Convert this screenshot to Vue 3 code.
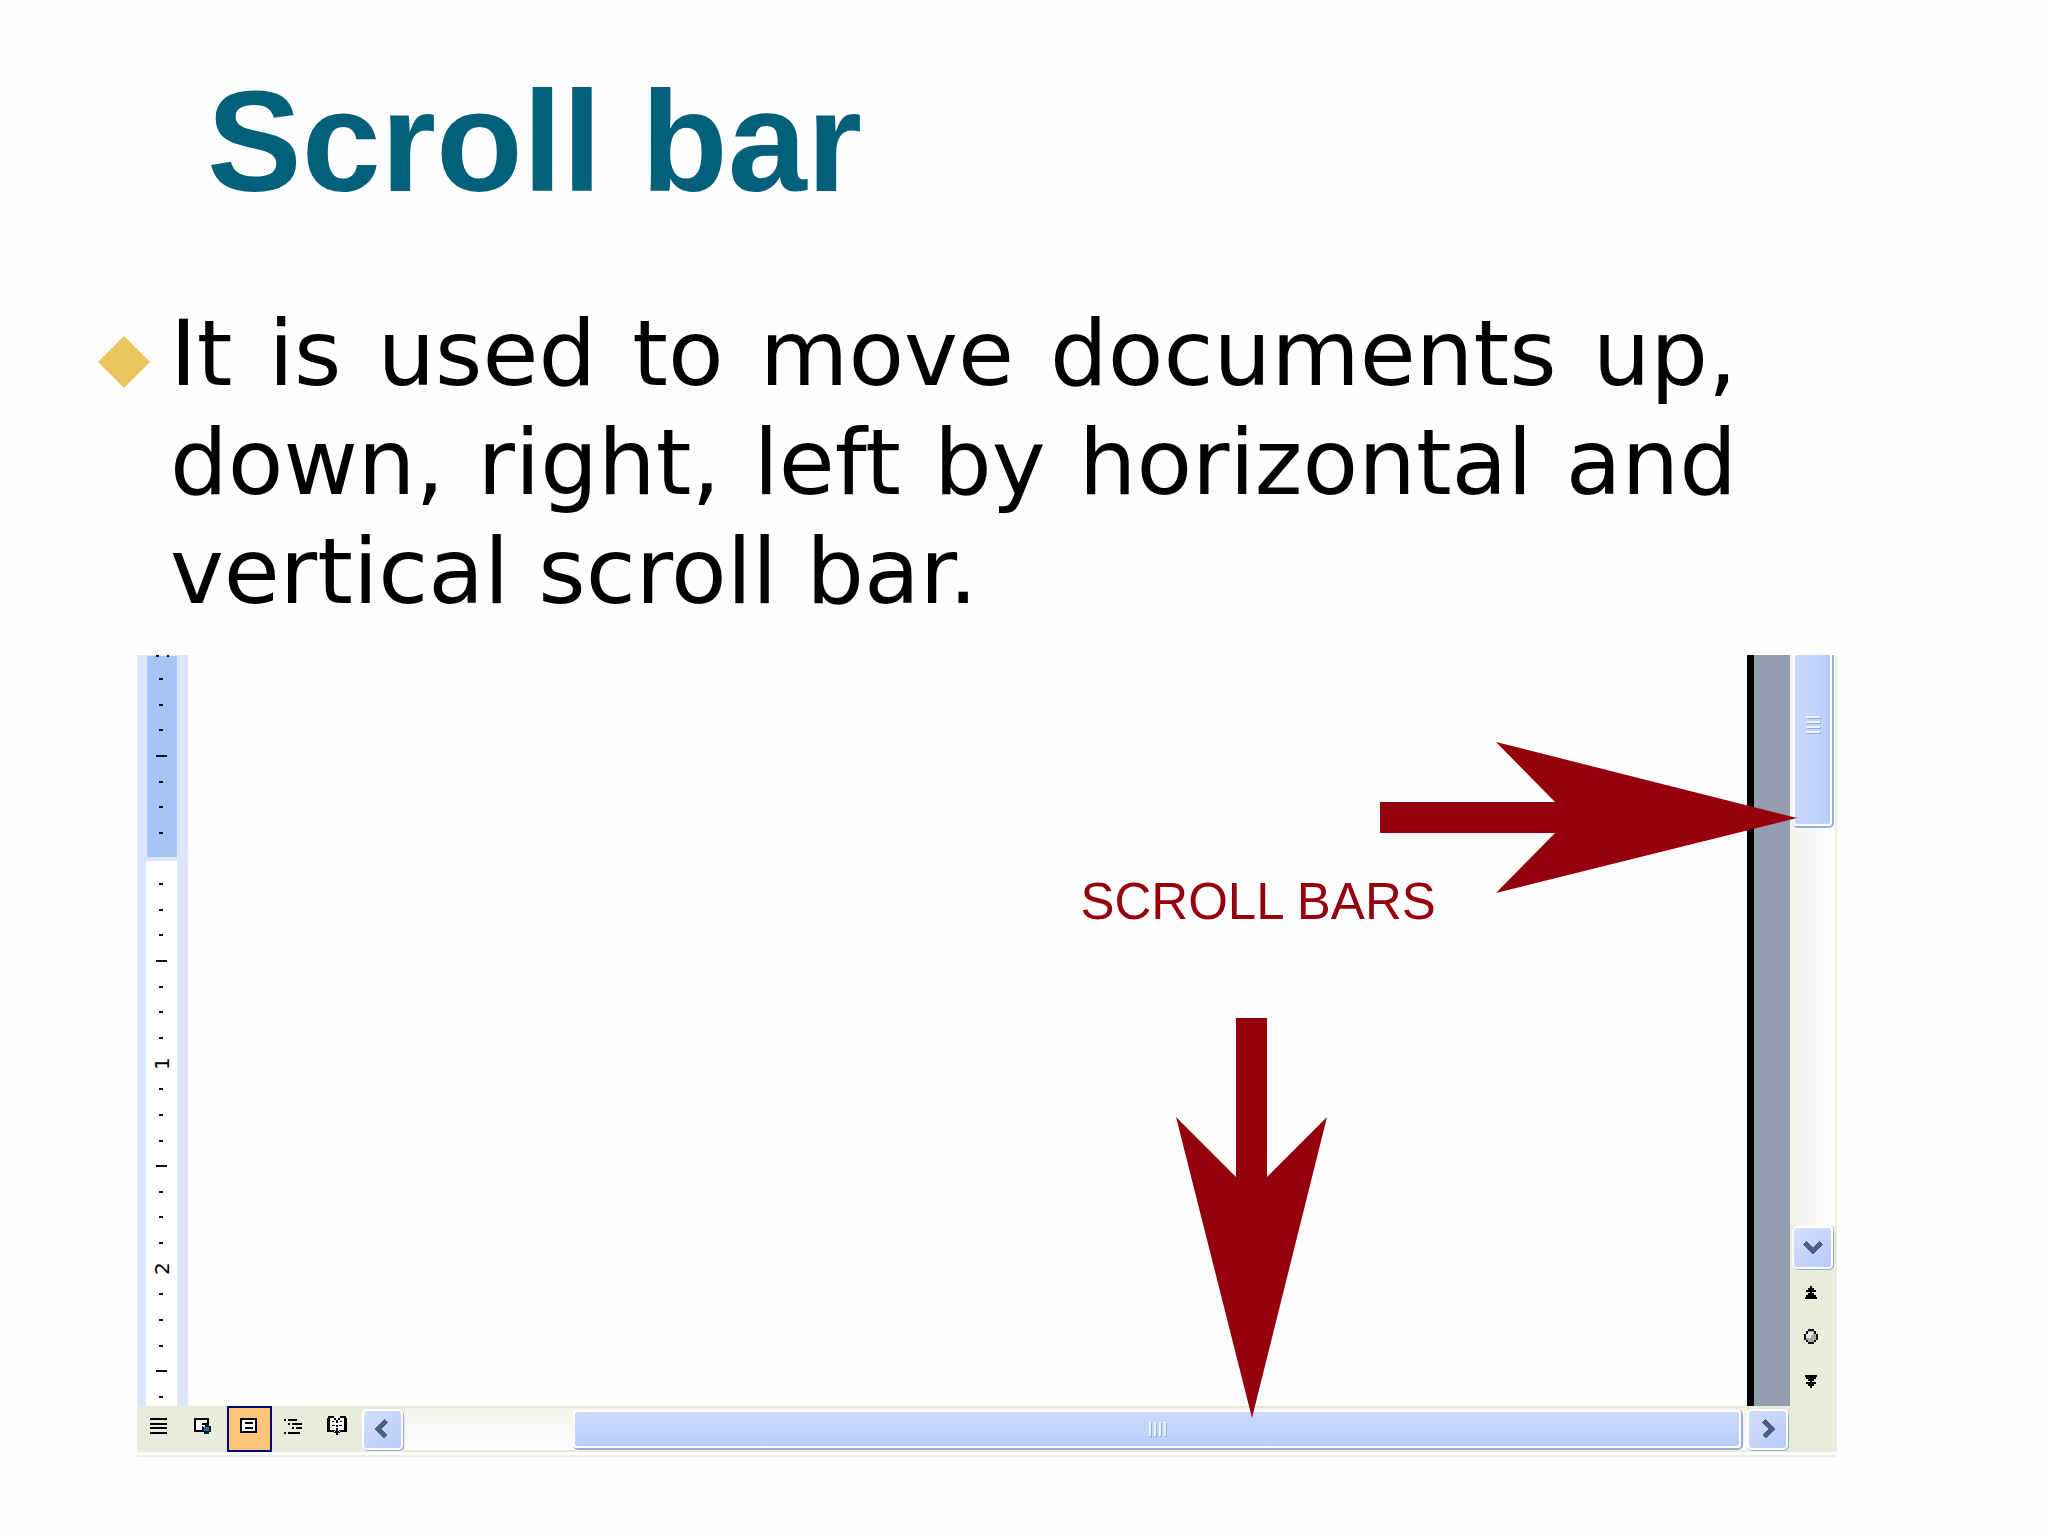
<template>
  <main class="slide">
    <h1 class="slide__title">Scroll bar</h1>

    <ul class="slide__list">
      <li class="slide__item">
        <svg class="slide__bullet" viewBox="0 0 52 52" aria-hidden="true">
          <path d="M26 0 52 26 26 52 0 26Z" />
        </svg>
        <p class="slide__text">
          It is used to move documents up, down, right, left by horizontal and vertical scroll bar.
        </p>
      </li>
    </ul>

    <figure class="window">
      <!-- Document area -->
      <div class="workspace">
        <div class="ruler">
          <div class="ruler__margin"></div>
          <div class="ruler__body"></div>
          <svg class="ruler__cut" viewBox="0 0 16 2" aria-hidden="true">
            <path d="M2 0h3v2H2ZM13 0h2v2h-2Z" />
          </svg>
          <div class="ruler__ticks">
            <span v-for="(tick, i) in ticks" :key="i" class="tick" :class="`tick--${tick.type}`">{{
              tick.label
            }}</span>
          </div>
        </div>
        <div class="page"></div>
        <div class="desk"></div>
      </div>

      <!-- Vertical scroll bar -->
      <div class="vbar">
        <div class="vbar__track">
          <div class="thumb thumb--vertical"><i v-for="n in 4" :key="n"></i></div>
        </div>
        <button class="arrow-btn" type="button" aria-label="Scroll down">
          <svg viewBox="0 0 20 20"><path d="M2 5 10 13 18 5" /></svg>
        </button>
        <div class="vbar__nav">
          <button class="nav-btn" type="button" aria-label="Previous page">
            <svg viewBox="0 0 16 16">
              <path d="M7 1h2v2h2v2h2v2H9v1h2v2h2v2h1v2H2v-2h1v-2h2V8h2V7H3V5h2V3h2Z" />
            </svg>
          </button>
          <button class="nav-btn" type="button" aria-label="Select browse object">
            <svg viewBox="0 0 16 16">
              <path d="M5 0h6v2h2v3h2v6h-2v2h-2v2H5v-2H3v-2H1V5h2V2h2Z" fill="#111" />
              <path d="M5 2h6v3h2v6h-2v2H5v-2H3V5h2Z" fill="#a9a9a4" />
              <path d="M5 3h5v3H8v3H3V5h2Z" fill="#e6e6e2" />
            </svg>
          </button>
          <button class="nav-btn" type="button" aria-label="Next page">
            <svg viewBox="0 0 16 16">
              <path d="M7 15h2v-2h2v-2h2V9H9V8h2V6h2V4h1V2H2v2h1v2h2v2h2v1H3v2h2v2h2Z" />
            </svg>
          </button>
        </div>
      </div>

      <!-- View buttons and horizontal scroll bar -->
      <div class="hbar">
        <button
          v-for="view in views"
          :key="view.name"
          class="view-btn"
          :class="{ 'view-btn--active': view.name === activeView }"
          type="button"
          :aria-label="view.name"
          @click="activeView = view.name"
        >
          <svg viewBox="0 0 24 24">
            <path v-if="view.paper" :d="view.paper" fill="#fff" />
            <path :d="view.path" fill="#000" fill-rule="evenodd" />
            <g v-if="view.name === 'Web Layout'">
              <path d="M13 10h5v2h2v6h-2v2h-5v-2h-2v-6h2Z" fill="#0b1830" />
              <path d="M12 11h2v2h-2Z" fill="#fff" />
              <path d="M13 13h3v4h-3Z" fill="#2a62b8" />
              <path d="M15 13h3v4h-3Z" fill="#23806a" />
            </g>
          </svg>
        </button>
        <button class="arrow-btn" type="button" aria-label="Scroll left">
          <svg viewBox="0 0 20 20"><path d="M13 2 5 10 13 18" /></svg>
        </button>
        <div class="hbar__track">
          <div class="thumb thumb--horizontal"><i v-for="n in 4" :key="n"></i></div>
        </div>
        <button class="arrow-btn" type="button" aria-label="Scroll right">
          <svg viewBox="0 0 20 20"><path d="M6 2 14 10 6 18" /></svg>
        </button>
      </div>

      <!-- Callout over the window -->
      <svg class="callout-arrows" viewBox="0 0 1700 797" aria-hidden="true">
        <path d="M1243 147H1418L1359 87 1660 163 1359 238 1418 178H1243Z" />
        <path d="M1099 363H1130V522L1190 462 1115 763 1039 462 1099 522Z" />
      </svg>
      <figcaption class="callout-label">SCROLL BARS</figcaption>
    </figure>
  </main>
</template>

<script setup>
import { ref } from 'vue';

const activeView = ref('Print Layout');

const views = [
  { name: 'Normal', path: 'M4 4h17v2H4ZM4 9h17v2H4ZM4 13h17v2H4ZM4 18h17v2H4Z' },
  {
    name: 'Web Layout',
    paper: 'M4 6h13v11H4Z',
    path: 'M3 4h15v14H3ZM5 6v10h11V6ZM11 9h5v2h-5Z',
  },
  {
    name: 'Print Layout',
    paper: 'M4 5h15v13H4Z',
    path: 'M3 4h17v15H3ZM5 6v11h13V6ZM8 8h8v2H8ZM8 13h8v2H8Z',
  },
  {
    name: 'Outline',
    path: 'M3 5h2v2H3ZM7 5h9v2H7ZM7 9h2v2H7ZM11 9h10v2H11ZM11 13h2v2h-2ZM15 13h6v2h-6ZM3 18h2v2H3ZM7 18h12v2H7Z',
  },
  {
    name: 'Reading Layout',
    paper: 'M2 4h18v12H2Z',
    path: 'M2 2h6v2H4v12h5v2H1V4h1ZM20 2h-6v2h4v12h-5v2h8V4h-1ZM8 4h2v2H8ZM12 4h2v2h-2ZM10 6h2v3h-2ZM10 11h2v2h-2ZM6 7h2v1H6ZM6 11h3v1H6ZM14 7h2v1h-2ZM13 11h3v1h-3ZM10 14h2v3h2v2h-2v2h-2v-2H8v-2h2Z',
  },
];

// A long mark every half inch, a number every inch
const ticks = Array.from({ length: 29 }, (_, i) => {
  if (i === 7) return { type: 'blank' };
  if (i === 15) return { type: 'number', label: '1' };
  if (i === 23) return { type: 'number', label: '2' };
  return { type: i % 8 === 3 ? 'long' : 'dot' };
});
</script>

<style>
body {
  margin: 0;
  background: #fefefe;
}
</style>

<style scoped>
.slide {
  padding: 62px 211px 80px 98px;
  font-family: 'Liberation Sans', Arial, sans-serif;
}

.slide__title {
  margin: 0 0 77px 109px;
  font-size: 142px;
  line-height: 160px;
  color: #03607a;
}

.slide__list {
  margin: 0 100px 29px 0;
  padding: 0;
  list-style: none;
}

.slide__item {
  display: flex;
  gap: 20px;
}

.slide__bullet {
  flex: none;
  width: 52px;
  height: 52px;
  margin-top: 37px;
  fill: #e9c65e;
}

.slide__text {
  flex: 1;
  margin: 0;
  font-family: 'DejaVu Sans', Verdana, sans-serif;
  font-size: 91px;
  line-height: 109px;
  text-align: justify;
  color: #000;
}

button {
  padding: 0;
  border: 0;
  background: none;
  cursor: pointer;
}

button svg {
  display: block;
  shape-rendering: crispEdges;
}

/* Window */
.window {
  position: relative;
  display: grid;
  grid-template-columns: 1fr 47px;
  grid-template-rows: 1fr 46px;
  aspect-ratio: 1700 / 797;
  margin: 0 0 0 39px;
  padding-bottom: 3px;
  border-bottom: 2px solid #efeee6;
  box-sizing: content-box;
}

.workspace {
  display: flex;
  min-height: 0;
}

.ruler {
  position: relative;
  display: flex;
  flex-direction: column;
  gap: 4px;
  width: 51px;
  padding: 1px 11px 0 9px;
  box-sizing: border-box;
  background: #dbe6fb;
}

.ruler__margin {
  flex: 201;
  margin-left: 1px;
  background: #a5c3f5;
}

.ruler__body {
  flex: 545;
  background: #fff;
}

/* Lower edge of the number scrolled out above */
.ruler__cut {
  position: absolute;
  top: 0;
  left: 17px;
  width: 16px;
  height: 2px;
}

/* The scale lies over both the margin and the body of the ruler */
.ruler__ticks {
  position: absolute;
  inset: 11px 11px -3px 9px;
  display: flex;
  flex-direction: column;
  justify-content: space-between;
  align-items: center;
}

.tick {
  display: flex;
  align-items: center;
  justify-content: center;
  height: 26px;
  width: 16px;
  margin: 0 0 -1px;
  font-family: 'DejaVu Sans', Verdana, sans-serif;
  font-size: 20px;
  line-height: 16px;
  color: #000;
}

.tick--dot::before,
.tick--long::before {
  content: '';
  width: 4px;
  height: 2px;
  margin-right: 2px;
  background: #111;
}

.tick--long::before {
  width: 11px;
  margin-right: 0;
}

.tick--number {
  writing-mode: vertical-rl;
  transform: rotate(180deg);
}

.page {
  flex: 1;
}

.desk {
  width: 36px;
  border-left: 7px solid #000;
  background: #959db0;
}

/* Scroll bars */
.vbar {
  grid-row: 1 / 3;
  grid-column: 2;
  display: flex;
  flex-direction: column;
  align-items: flex-start;
  background: #ebebdc;
}

.vbar__track {
  flex: 1;
  align-self: stretch;
  padding: 0 3px 0 3px;
  border-right: 2px solid #f0efe3;
  background: linear-gradient(90deg, #f2f1ee, #fefefe);
}

.vbar__nav {
  display: flex;
  flex-direction: column;
  align-items: center;
  gap: 20px;
  width: 100%;
  padding: 12px 6px 59px 0;
  box-sizing: border-box;
}

.nav-btn {
  padding: 4px;
}

.nav-btn svg {
  width: 16px;
  height: 16px;
}

.hbar {
  grid-column: 1;
  grid-row: 2;
  display: flex;
  align-items: center;
  background: #ebebdc;
}

.hbar__track {
  flex: 1;
  display: flex;
  height: 42px;
  padding: 2px 6px 2px 168px;
  box-sizing: border-box;
  background: linear-gradient(#f3f2ee, #fefefe);
}

.thumb {
  display: flex;
  align-items: center;
  justify-content: center;
  box-sizing: border-box;
  border: 2px solid #fff;
  border-radius: 4px;
  box-shadow: 1px 1px 0 1px #93afd6;
}

.thumb i {
  background: #eef4ff;
  box-shadow: 1px 1px 0 #8fabe8;
}

.thumb--vertical {
  flex-direction: column;
  gap: 3px;
  height: 171px;
  padding-bottom: 30px;
  border-top: 0;
  border-radius: 0 0 4px 4px;
  background: linear-gradient(90deg, #c9d7fc, #c2d4fd 60%, #b5cdfb);
}

.thumb--vertical i {
  width: 14px;
  height: 2px;
}

.thumb--horizontal {
  flex: 1;
  gap: 3px;
  background: linear-gradient(#cbd9fa, #c2d5fe 60%, #b7cbf6);
}

.thumb--horizontal i {
  width: 2px;
  height: 14px;
}

.arrow-btn {
  display: flex;
  align-items: center;
  justify-content: center;
  flex: none;
  width: 41px;
  height: 41px;
  margin: 0 2px 0 0;
  border: 2px solid #fff;
  border-radius: 5px;
  background: linear-gradient(135deg, #d3dffd, #b7cbf8);
  box-shadow: 1px 1px 0 #8da9d8;
}

.vbar .arrow-btn {
  height: 43px;
  margin-left: 2px;
}

.arrow-btn svg {
  width: 20px;
  height: 20px;
  fill: none;
  stroke: #4d6188;
  stroke-width: 5;
}

.view-btn {
  display: flex;
  justify-content: center;
  flex: none;
  width: 45px;
  height: 46px;
  padding: 8px 4px 0 0;
  box-sizing: border-box;
}

.view-btn svg {
  flex: none;
  width: 24px;
  height: 24px;
}

.view-btn--active {
  padding: 6px 2px 0 0;
  border: 2px solid #00007f;
  background: #fec579;
}

/* Callout */
.callout-arrows {
  position: absolute;
  top: 0;
  left: 0;
  width: 100%;
  fill: #96000d;
  pointer-events: none;
}

.callout-label {
  position: absolute;
  top: 27%;
  left: 55.5%;
  font-size: 51px;
  line-height: 62px;
  white-space: nowrap;
  color: #96000d;
}
</style>
